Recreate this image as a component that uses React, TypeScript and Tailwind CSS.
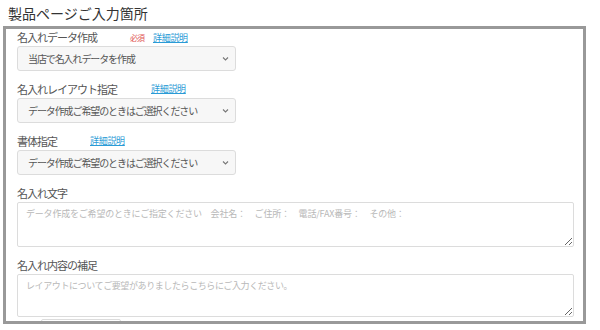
import React from "react";

const font = { fontFamily: '"Noto Sans CJK JP", "Noto Sans", sans-serif' };

function Chevron() {
  return (
    <svg width="7" height="5" viewBox="0 0 7 5" className="absolute right-[6px] top-1/2 -translate-y-1/2">
      <path d="M1 1 L3.5 3.5 L6 1" fill="none" stroke="#777" strokeWidth="1.1" />
    </svg>
  );
}

function Select({ text }: { text: string }) {
  return (
    <div className="relative w-[219px] h-[25px] bg-[#f7f7f7] border border-[#dcdcdc] rounded-[3px] flex items-center pl-[10px] text-[10px] text-[#555] tracking-[-1.1px]">
      {text}
      <Chevron />
    </div>
  );
}

function Link() {
  return <span className="text-[9px] text-[#2a9bd6] underline tracking-[-0.3px]">詳細説明</span>;
}

export default function App() {
  return (
    <div className="w-[600px] h-[330px] bg-white" style={font}>
      <div className="h-[26px] pl-[8px] pt-[1px] text-[14px] leading-[24px] text-[#333]">製品ページご入力箇所</div>
      <div className="mx-[3px] w-[583px] h-[298px] border-[3px] border-[#999] overflow-hidden pl-[11px]">
        <div className="h-[17px] flex items-center text-[11px] text-[#555] tracking-[-1px]">
          <span className="w-[113px]">名入れデータ作成</span>
          <span className="text-[8px] text-[#e05555] w-[23px]">必須</span>
          <Link />
        </div>
        <Select text="当店で名入れデータを作成" />
        <div className="h-[18px] mt-[9px] flex items-center text-[11px] text-[#555] tracking-[-1px]">
          <span className="w-[134px]">名入れレイアウト指定</span>
          <Link />
        </div>
        <Select text="データ作成ご希望のときはご選択ください" />
        <div className="h-[18px] mt-[9px] flex items-center text-[11px] text-[#555] tracking-[-1px]">
          <span className="w-[73px]">書体指定</span>
          <Link />
        </div>
        <Select text="データ作成ご希望のときはご選択ください" />
        <div className="h-[18px] mt-[9px] flex items-center text-[11px] text-[#555] tracking-[-1px]">
          名入れ文字
        </div>
        <textarea
          className="block w-[557px] h-[45px] border border-[#dcdcdc] rounded-[2px] px-[8px] py-[4px] text-[9px] tracking-[-0.2px] text-[#555] placeholder:text-[#b8b8b8] outline-none"
          placeholder="データ作成をご希望のときにご指定ください　会社名：　ご住所：　電話/FAX番号：　その他："
        />
        <div className="h-[18px] mt-[9px] flex items-center text-[11px] text-[#555] tracking-[-1px]">
          名入れ内容の補足
        </div>
        <textarea
          className="block w-[557px] h-[43px] border border-[#dcdcdc] rounded-[2px] px-[8px] py-[4px] text-[9px] tracking-[-0.4px] text-[#555] placeholder:text-[#b8b8b8] outline-none"
          placeholder="レイアウトについてご要望がありましたらこちらにご入力ください。"
        />
        <div className="mt-[2px] ml-[24px] w-[80px] h-[20px] border border-[#dcdcdc] rounded-[2px]" />
      </div>
    </div>
  );
}
